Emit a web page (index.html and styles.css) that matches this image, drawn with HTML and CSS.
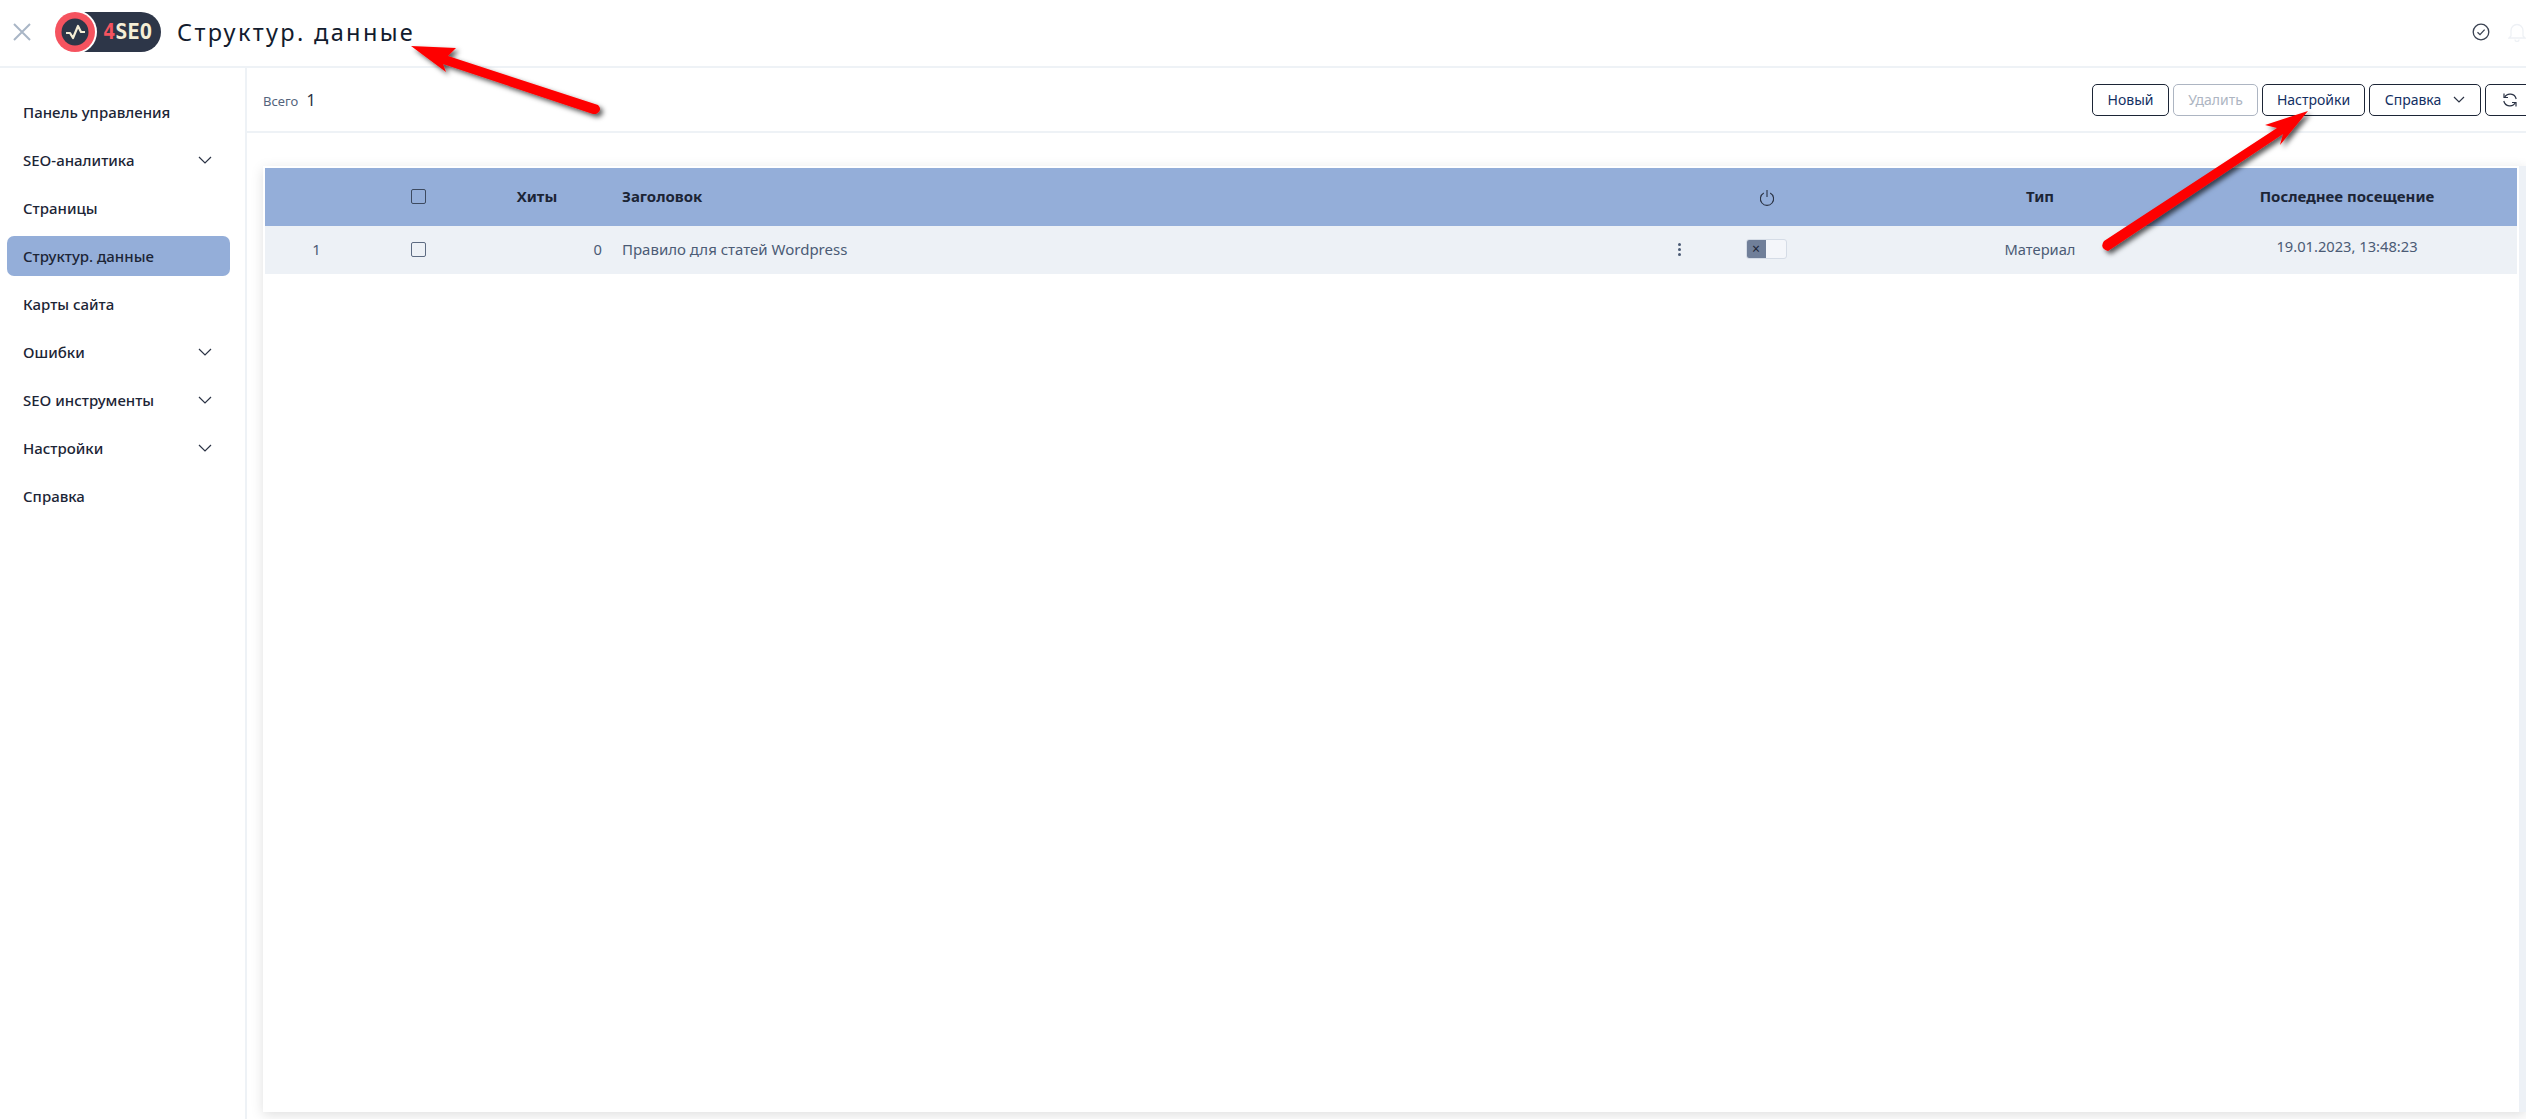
FILE: index.html
```html
<!DOCTYPE html>
<html lang="ru">
<head>
    <meta charset="UTF-8">
    <meta name="viewport" content="width=device-width, initial-scale=1.0">
    <title>Структур. данные</title>
    <link rel="stylesheet" href="styles.css">
</head>
<body>
    <header class="topbar">
        <svg class="close-icon" width="20" height="20" viewBox="0 0 20 20">
            <path d="M2 2 L18 18 M18 2 L2 18" fill="none" stroke="#a9b6c6" stroke-width="2"/>
        </svg>
        <svg class="logo" width="106" height="40" viewBox="0 0 106 40">
            <path d="M20 0 H86 A20 20 0 0 1 86 40 H20 Z" fill="#2d3648"/>
            <circle cx="20" cy="20" r="22" fill="#fff"/>
            <circle cx="20" cy="20" r="20" fill="#f5535f"/>
            <circle cx="20" cy="20" r="13.5" fill="#2d3648"/>
            <path d="M11 21 H15 L18 26 L23 14 L26 20 H30" fill="none" stroke="#f5eed6" stroke-width="2.2" stroke-linejoin="round"/>
            <text class="logo-text" x="48" y="27" textLength="49" lengthAdjust="spacingAndGlyphs"><tspan fill="#f5535f">4</tspan><tspan fill="#f5eed6">SEO</tspan></text>
        </svg>
        <h1 class="page-title">Структур. данные</h1>
        <div class="topbar-icons">
            <svg width="18" height="18" viewBox="0 0 18 18">
                <circle cx="9" cy="9" r="7.8" fill="none" stroke="#3a4252" stroke-width="1.3"/>
                <path d="M5.5 9.2 L8 11.6 L12.6 6.6" fill="none" stroke="#3a4252" stroke-width="1.3"/>
            </svg>
            <svg width="18" height="20" viewBox="0 0 18 20">
                <path d="M3 14 V8.5 A6 6 0 0 1 15 8.5 V14 L17 16 H1 Z M7 17.5 A2 2 0 0 0 11 17.5" fill="none" stroke="#eef1f5" stroke-width="1.3"/>
            </svg>
        </div>
    </header>

    <div class="layout">
        <nav class="sidebar">
            <a class="nav-item">Панель управления</a>
            <a class="nav-item">SEO-аналитика <svg class="chevron" width="14" height="8" viewBox="0 0 14 8"><path d="M1 1 L7 7 L13 1" /></svg></a>
            <a class="nav-item">Страницы</a>
            <a class="nav-item active">Структур. данные</a>
            <a class="nav-item">Карты сайта</a>
            <a class="nav-item">Ошибки <svg class="chevron" width="14" height="8" viewBox="0 0 14 8"><path d="M1 1 L7 7 L13 1" /></svg></a>
            <a class="nav-item">SEO инструменты <svg class="chevron" width="14" height="8" viewBox="0 0 14 8"><path d="M1 1 L7 7 L13 1" /></svg></a>
            <a class="nav-item">Настройки <svg class="chevron" width="14" height="8" viewBox="0 0 14 8"><path d="M1 1 L7 7 L13 1" /></svg></a>
            <a class="nav-item">Справка</a>
        </nav>

        <main class="content">
            <div class="toolbar">
                <div class="total">Всего <b>1</b></div>
                <div class="actions">
                    <button class="btn btn-new">Новый</button>
                    <button class="btn btn-delete" disabled>Удалить</button>
                    <button class="btn btn-settings">Настройки</button>
                    <button class="btn btn-help">Справка <svg class="chevron" width="12" height="7" viewBox="0 0 12 7"><path d="M1 1 L6 6 L11 1" /></svg></button>
                    <button class="btn btn-refresh">
                        <svg width="16" height="16" viewBox="0 0 16 16" fill="none" stroke="#2b3345" stroke-width="1.2">
                            <path d="M2.5 5.5 A6.3 6.3 0 0 1 14.2 7"/>
                            <path d="M2 1.6 V5.5 H6"/>
                            <path d="M13.5 10.5 A6.3 6.3 0 0 1 1.8 9"/>
                            <path d="M14 14.4 V10.5 H10"/>
                        </svg>
                    </button>
                </div>
            </div>

            <div class="panel-area">
                <section class="panel">
                    <div class="table-row table-head">
                        <div></div>
                        <div class="cell-center"><span class="checkbox"></span></div>
                        <div class="cell-hits">Хиты</div>
                        <div class="cell-title">Заголовок</div>
                        <div></div>
                        <div class="cell-center cell-switch">
                            <svg class="power-icon" width="16" height="18" viewBox="0 0 16 18" fill="none" stroke="#2b3345" stroke-width="1.1">
                                <path d="M8 1 V8"/>
                                <path d="M4.8 4 A6.6 6.6 0 1 0 11.2 4"/>
                            </svg>
                        </div>
                        <div class="cell-center">Тип</div>
                        <div class="cell-center cell-last">Последнее посещение</div>
                    </div>
                    <div class="table-row table-body">
                        <div class="cell-center">1</div>
                        <div class="cell-center"><span class="checkbox"></span></div>
                        <div class="cell-zero">0</div>
                        <div class="cell-title">Правило для статей Wordpress</div>
                        <div class="cell-center kebab"><i></i><i></i><i></i></div>
                        <div class="cell-center cell-switch">
                            <span class="switch"><span class="switch-off">×</span></span>
                        </div>
                        <div class="cell-center">Материал</div>
                        <div class="cell-center cell-last cell-date">19.01.2023, 13:48:23</div>
                    </div>
                </section>
                <div class="panel-strip"></div>
            </div>
        </main>
    </div>

    <!-- стрелки поверх скриншота -->
    <svg class="arrows" width="2526" height="1119" viewBox="0 0 2526 1119">
        <defs>
            <filter id="arrowShadow" x="-20%" y="-20%" width="150%" height="150%">
                <feDropShadow dx="3" dy="3" stdDeviation="2.5" flood-color="#000" flood-opacity="0.65"/>
            </filter>
        </defs>
        <g fill="#fe0000" filter="url(#arrowShadow)">
            <path d="M411 46 L456 48 L448 56 L598 105 Q603 110 596 114 L593 114 L443 64 L446 72 Z"/>
            <path d="M2308 111 L2265 125 L2277 128 L2104 241 Q2099 248 2108 251 L2283 134 L2280 145 Z"/>
        </g>
    </svg>
</body>
</html>
```

FILE: styles.css
```css
* {
    box-sizing: border-box;
}
html, body {
    height: 100%;
}
body {
    margin: 0;
    overflow: hidden;
    font-family: "Noto Sans", "Open Sans", sans-serif;
    font-size: 14.7px;
    color: #1c2536;
    background: #fff;
}

/* шапка */
.topbar {
    display: flex;
    align-items: center;
    height: 68px;
    padding: 0 0 3px 12px;
    border-bottom: 2px solid #eef2f6;
}
.close-icon {
    flex-shrink: 0;
}
.logo {
    margin-left: 23px;
    flex-shrink: 0;
}
.logo-text {
    font-family: "DejaVu Sans Mono", monospace;
    font-weight: bold;
    font-size: 21px;
}
.page-title {
    margin: 0 0 0 16px;
    font-size: 23.5px;
    font-weight: 400;
    letter-spacing: 2.35px;
    color: #131c2e;
}
.topbar-icons {
    display: flex;
    align-items: center;
    gap: 18px;
    margin-left: auto;
}

.layout {
    display: flex;
    height: calc(100% - 68px);
}

/* меню */
.sidebar {
    flex: 0 0 247px;
    padding: 24px 15px 0 7px;
    border-right: 2px solid #eef2f6;
    display: flex;
    flex-direction: column;
    gap: 8px;
}
.nav-item {
    display: flex;
    align-items: center;
    justify-content: space-between;
    height: 40px;
    padding: 0 18px 0 16px;
    border-radius: 7px;
    font-size: 15px;
    font-weight: 500;
    color: #1c2536;
}
.nav-item.active {
    background: #94aed9;
}
.chevron {
    fill: none;
    stroke: #2b3345;
    stroke-width: 1.2;
}

/* панель действий */
.content {
    flex: 1;
    min-width: 0;
    display: flex;
    flex-direction: column;
    background: #fff;
}
.toolbar {
    display: flex;
    align-items: center;
    justify-content: space-between;
    flex-shrink: 0;
    height: 65px;
    padding-left: 16px;
    border-bottom: 2px solid #eef2f6;
}
.total {
    font-size: 13px;
    color: #54647d;
}
.total b {
    margin-left: 5px;
    font-weight: 400;
    font-size: 16px;
    color: #2b3345;
}
.actions {
    display: flex;
    gap: 4px;
    margin-right: -9px;
}
.btn {
    display: flex;
    align-items: center;
    justify-content: center;
    gap: 12px;
    height: 32px;
    padding: 0;
    background: #fff;
    border: 1px solid #1c2536;
    border-radius: 5px;
    font-family: inherit;
    font-size: 14px;
    color: #132f63;
}
.btn:disabled {
    color: #adb5c2;
    border-color: #adb5c2;
}
.btn-new { width: 77px; }
.btn-delete { width: 85px; }
.btn-settings { width: 103px; }
.btn-help { width: 112px; }
.btn-refresh { width: 50px; }

/* таблица */
.panel-area {
    flex: 1;
    display: flex;
    margin: 33px 0 7px 16px;
    box-shadow: 0 3px 12px rgba(0, 0, 0, 0.13);
}
.panel {
    flex: 1;
    padding: 2px 2px 0;
    background: #fff;
}
.panel-strip {
    flex: 0 0 7px;
    background: #edf1f6;
}
.table-row {
    display: grid;
    grid-template-columns: 103px 100px 144px 1fr 36px 142px 402px 276px;
    align-items: center;
}
.table-head {
    height: 58px;
    padding-bottom: 2px;
    background: #94aed9;
    font-weight: 700;
    font-size: 15px;
    color: #1c2536;
}
.table-body {
    height: 48px;
    padding-bottom: 2px;
    background: #edf1f6;
    color: #4b5b75;
}
.cell-center {
    display: flex;
    align-items: center;
    justify-content: center;
}
.cell-hits {
    padding-right: 6px;
    text-align: center;
}
.cell-zero {
    padding-right: 10px;
    text-align: right;
}
.cell-title {
    padding-left: 10px;
}
.table-body .cell-title {
    font-size: 15px;
}
.cell-switch {
    padding-right: 3px;
}
.cell-last {
    padding-right: 64px;
    white-space: nowrap;
}
.cell-date {
    margin-top: -7px;
}
.checkbox {
    display: block;
    width: 15px;
    height: 15px;
    border: 1.5px solid #3d4a60;
    border-radius: 2px;
}
.table-body .checkbox {
    border-color: #5d6b82;
}
.power-icon {
    margin-top: 4px;
}
.kebab {
    flex-direction: column;
    gap: 2px;
}
.kebab i {
    display: block;
    width: 3px;
    height: 3px;
    border-radius: 50%;
    background: #4b5b75;
}
.switch {
    display: flex;
    width: 41px;
    height: 20px;
    background: #f4f6fa;
    border: 1px solid #d5dce6;
    border-radius: 3px;
    overflow: hidden;
}
.switch-off {
    display: flex;
    align-items: center;
    justify-content: center;
    width: 20px;
    margin: -1px 0 -1px -1px;
    background: #707f99;
    color: #1c2536;
    font-size: 14px;
    line-height: 1;
}

/* стрелки */
.arrows {
    position: absolute;
    top: 0;
    left: 0;
    pointer-events: none;
}
```
